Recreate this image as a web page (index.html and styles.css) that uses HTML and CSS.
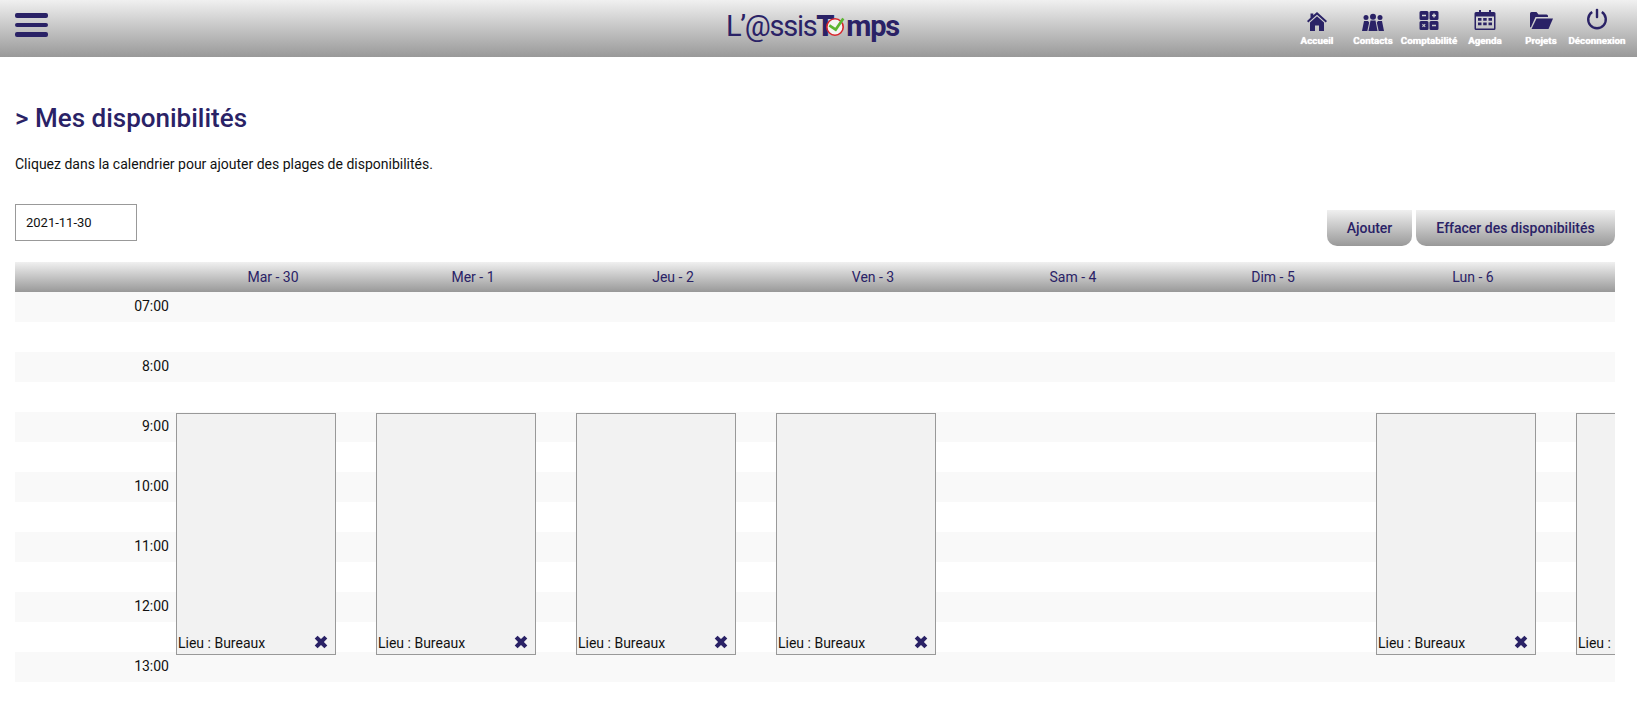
FILE: index.html
```html
<!DOCTYPE html>
<html lang="fr">
<head>
<meta charset="utf-8">
<title>Mes disponibilités</title>
<link rel="stylesheet" href="styles.css">
</head>
<body>
<svg class="defs" aria-hidden="true"><symbol id="x" viewBox="0 0 14 14"><path d="M0.700 3.600 3.600 0.700 7 4.100l3.400-3.400 2.900 2.900L9.900 7l3.400 3.400-2.900 2.900L7 9.900l-3.400 3.400-2.900-2.900L4.100 7z"/></symbol></svg>
<header class="topbar">
  <button class="burger" aria-label="Menu"><span></span><span></span><span></span></button>
  <div class="logo"><span class="logo-light">L’@ssis</span><span class="logo-t">T</span><svg class="logo-clock" viewBox="0 0 20 20"><circle cx="10" cy="10" r="8.200" fill="#f4f4f4" stroke="#d8262c" stroke-width="1.600"/><path d="M4.300 8.300l6.400 4.300 7.600-11" fill="none" stroke="#5cb531" stroke-width="2.600"/></svg><span class="logo-bold">mps</span></div>
  <nav class="nav">
    <a class="nav-item"><svg class="nav-icon" viewBox="0 0 24 24"><path d="M12 4 22 13l-1.300 1.400L12 6.800 3.300 14.400 2 13l3.500-3.200V5.500h2.800v1.800z"/><path d="M12 8.300l7 6.200V23h-5v-5.500h-4V23H5v-8.500z"/></svg><span>Accueil</span></a>
    <a class="nav-item"><svg class="nav-icon" viewBox="0 0 24 24"><circle cx="5" cy="9.500" r="2.500"/><circle cx="19" cy="9.500" r="2.500"/><circle cx="12" cy="8.700" r="3"/><path d="M1 23 3 13h4l1.200 1.500L6.300 23zM23 23l-2-10h-4l-1.200 1.500L17.700 23zM7.500 23l2-10.500h5l2 10.500z"/></svg><span>Contacts</span></a>
    <a class="nav-item"><svg class="nav-icon" viewBox="0 0 24 24"><path fill-rule="evenodd" d="M4 3h6A1.500 1.500 0 0 1 11.500 4.500V10.500A1.500 1.500 0 0 1 10 12H4A1.500 1.500 0 0 1 2.500 10.500V4.500A1.500 1.500 0 0 1 4 3zM5 6.800v1.400h4V6.800zM14 3h6A1.500 1.500 0 0 1 21.500 4.500V10.500A1.500 1.500 0 0 1 20 12H14A1.500 1.500 0 0 1 12.500 10.500V4.500A1.500 1.500 0 0 1 14 3zM15 6.800v1.400h1.300V9.500h1.400V8.200H19V6.800H17.700V5.500h-1.400V6.800zM4 13h6a1.500 1.500 0 0 1 1.500 1.500v6A1.500 1.500 0 0 1 10 22H4a1.500 1.500 0 0 1-1.500-1.500v-6A1.500 1.500 0 0 1 4 13zM5 16.500l1 1-1 1 .8.800 1-1 1 1 .8-.8-1-1 1-1-.8-.8-1 1-1-1zM14 13h6a1.500 1.500 0 0 1 1.500 1.500v6a1.500 1.500 0 0 1-1.500 1.500H14a1.500 1.500 0 0 1-1.500-1.500v-6A1.500 1.500 0 0 1 14 13zM15 16.800v1.400h4v-1.400z"/></svg><span>Comptabilité</span></a>
    <a class="nav-item"><svg class="nav-icon" viewBox="0 0 24 24"><path fill-rule="evenodd" d="M6 2h2v2h8V2h2v2h3A1.500 1.500 0 0 1 22.500 5.500V20.500A1.500 1.500 0 0 1 21 22H3a1.500 1.500 0 0 1-1.500-1.500V5.500A1.500 1.500 0 0 1 3 4h3zM3 8.500v12h18v-12zM5 10h3.500v2.800H5zM10.200 10h3.500v2.800h-3.500zM15.500 10H19v2.800h-3.500zM5 14.500h3.500v2.800H5zM10.200 14.500h3.500v2.800h-3.500zM15.500 14.500H19v2.800h-3.500z"/></svg><span>Agenda</span></a>
    <a class="nav-item"><svg class="nav-icon" viewBox="0 0 24 24"><path d="M1 19V5.500A1.500 1.500 0 0 1 2.500 4h5l2 2.500h8A1.500 1.500 0 0 1 19 8v1H6.500L1.800 19.500z"/><path d="M7.500 10.500H24L19.500 21H2.500z"/></svg><span>Projets</span></a>
    <a class="nav-item"><svg class="nav-icon" viewBox="0 0 24 24"><path class="ring" d="M7.200 4.100A8.800 8.800 0 1 0 16.800 4.100"/><rect x="10.800" y="0.800" width="2.400" height="9.500" rx="1"/></svg><span>Déconnexion</span></a>
  </nav>
</header>
<main class="page">
  <h1 class="title">&gt; Mes disponibilités</h1>
  <p class="intro">Cliquez dans la calendrier pour ajouter des plages de disponibilités.</p>
  <div class="toolbar">
    <input class="date" type="text" value="2021-11-30">
    <div class="actions">
      <button class="btn btn-add">Ajouter</button>
      <button class="btn btn-clear">Effacer des disponibilités</button>
    </div>
  </div>
  <section class="calendar">
    <div class="head">Mar - 30</div>
    <div class="head">Mer - 1</div>
    <div class="head">Jeu - 2</div>
    <div class="head">Ven - 3</div>
    <div class="head">Sam - 4</div>
    <div class="head">Dim - 5</div>
    <div class="head">Lun - 6</div>
    <div class="head"></div>

    <div class="stripe r1"></div><div class="stripe r3"></div><div class="stripe r5"></div><div class="stripe r7"></div><div class="stripe r9"></div><div class="stripe r11"></div><div class="stripe r13"></div>

    <div class="hour r1">07:00</div>
    <div class="hour r3">8:00</div>
    <div class="hour r5">9:00</div>
    <div class="hour r7">10:00</div>
    <div class="hour r9">11:00</div>
    <div class="hour r11">12:00</div>
    <div class="hour r13">13:00</div>

    <div class="slot c1"><span>Lieu : Bureaux</span><svg class="del"><use href="#x"/></svg></div>
    <div class="slot c2"><span>Lieu : Bureaux</span><svg class="del"><use href="#x"/></svg></div>
    <div class="slot c3"><span>Lieu : Bureaux</span><svg class="del"><use href="#x"/></svg></div>
    <div class="slot c4"><span>Lieu : Bureaux</span><svg class="del"><use href="#x"/></svg></div>
    <div class="slot c7"><span>Lieu : Bureaux</span><svg class="del"><use href="#x"/></svg></div>
    <div class="slot c8"><span>Lieu : Bureaux</span><svg class="del"><use href="#x"/></svg></div>
  </section>
</main>
</body>
</html>
```
FILE: styles.css
```css
* { box-sizing: border-box; }
html, body { margin: 0; height: 100%; overflow: hidden; }
body { font-family: Roboto, "Liberation Sans", sans-serif; font-size: 14px; color: #111; background: #fff; }
.defs { display: none; }

.topbar {
  display: flex; align-items: flex-start; justify-content: space-between;
  height: 57px; padding: 0 12px 0 15px;
  background: linear-gradient(#f0f0f0, #999);
  position: relative;
}
.burger { display: flex; flex-direction: column; gap: 5px; width: 33px; margin: 13px 0 0; padding: 0; border: 0; background: none; }
.burger span { display: block; height: 4.500px; border-radius: 2px; background: #2a2266; }

.logo { display: flex; align-items: center; position: absolute; left: 726px; top: 9px; height: 34px; color: #2a2266; font-size: 29px; line-height: 34px; letter-spacing: -1.300px; white-space: nowrap; }
.logo-light { font-weight: 400; }
.logo-t { font-weight: 900; }
.logo-bold { font-weight: 700; }
.logo-clock { width: 20px; height: 20px; margin: 2px 1px 0 -8px; position: relative; }

.nav { display: flex; }
.nav-item { display: flex; flex-direction: column; align-items: center; width: 56px; padding-top: 8px; color: #fff; font-size: 9.800px; font-weight: 700; text-shadow: 0 0 1px #fff; white-space: nowrap; }
.nav-icon { width: 24px; height: 24px; fill: #2a2266; margin-bottom: 3px; }
.ring { fill: none; stroke: #2a2266; stroke-width: 2.400px; }

.page { padding: 0 22px 0 15px; }
.title { margin: 45px 0 0; color: #2a2266; font-size: 26px; font-weight: 500; line-height: 32px; }
.intro { margin: 22px 0 0; font-size: 14px; line-height: 16px; }

.toolbar { display: flex; justify-content: space-between; align-items: flex-start; margin-top: 32px; height: 58px; }
.date { width: 122px; height: 37px; padding: 0 10px; border: 1px solid #999; border-radius: 0; font: 13px Roboto, sans-serif; color: #111; background: #fff; }
.actions { display: flex; gap: 4px; margin-top: 6px; }
.btn { height: 36px; padding: 0; border: 0; border-radius: 0 0 10px 10px; background: linear-gradient(#f0f0f0, #999); color: #2a2266; font: 500 14px Roboto, sans-serif; }
.btn-add { width: 85px; }
.btn-clear { width: 199px; }

.calendar {
  display: grid;
  grid-template-columns: 158px repeat(8, 200px);
  grid-template-rows: 30px repeat(13, 30px);
  width: 1600px; overflow: hidden;
}
.head { grid-row: 1; display: flex; align-items: center; justify-content: center; background: linear-gradient(#f0f0f0, #999); color: #2a2266; font-size: 14px; }
.head:first-child { grid-column: 2; }
.calendar::before { content: ""; grid-row: 1; grid-column: 1; background: linear-gradient(#f0f0f0, #999); }

.stripe { grid-column: 1 / -1; background: #f9f9f9; }
.r1 { grid-row: 2; } .r3 { grid-row: 4; } .r5 { grid-row: 6; } .r7 { grid-row: 8; }
.r9 { grid-row: 10; } .r11 { grid-row: 12; } .r13 { grid-row: 14; }

.hour { grid-column: 1; text-align: right; padding-right: 4px; line-height: 29px; font-size: 14px; }

.slot {
  display: flex; justify-content: space-between; align-items: flex-end;
  grid-row: 6 / span 9; align-self: start;
  width: 160px; height: 242px; margin: 1px 0 0 3px; padding: 0 7px 2px 1px;
  border: 1px solid #999; background: #f2f2f2; font-size: 14px; line-height: 17px;
}
.c1 { grid-column: 2; } .c2 { grid-column: 3; } .c3 { grid-column: 4; } .c4 { grid-column: 5; }
.c7 { grid-column: 8; } .c8 { grid-column: 9; }
.del { width: 14px; height: 14px; fill: #2a2266; margin-bottom: 3px; }
```
